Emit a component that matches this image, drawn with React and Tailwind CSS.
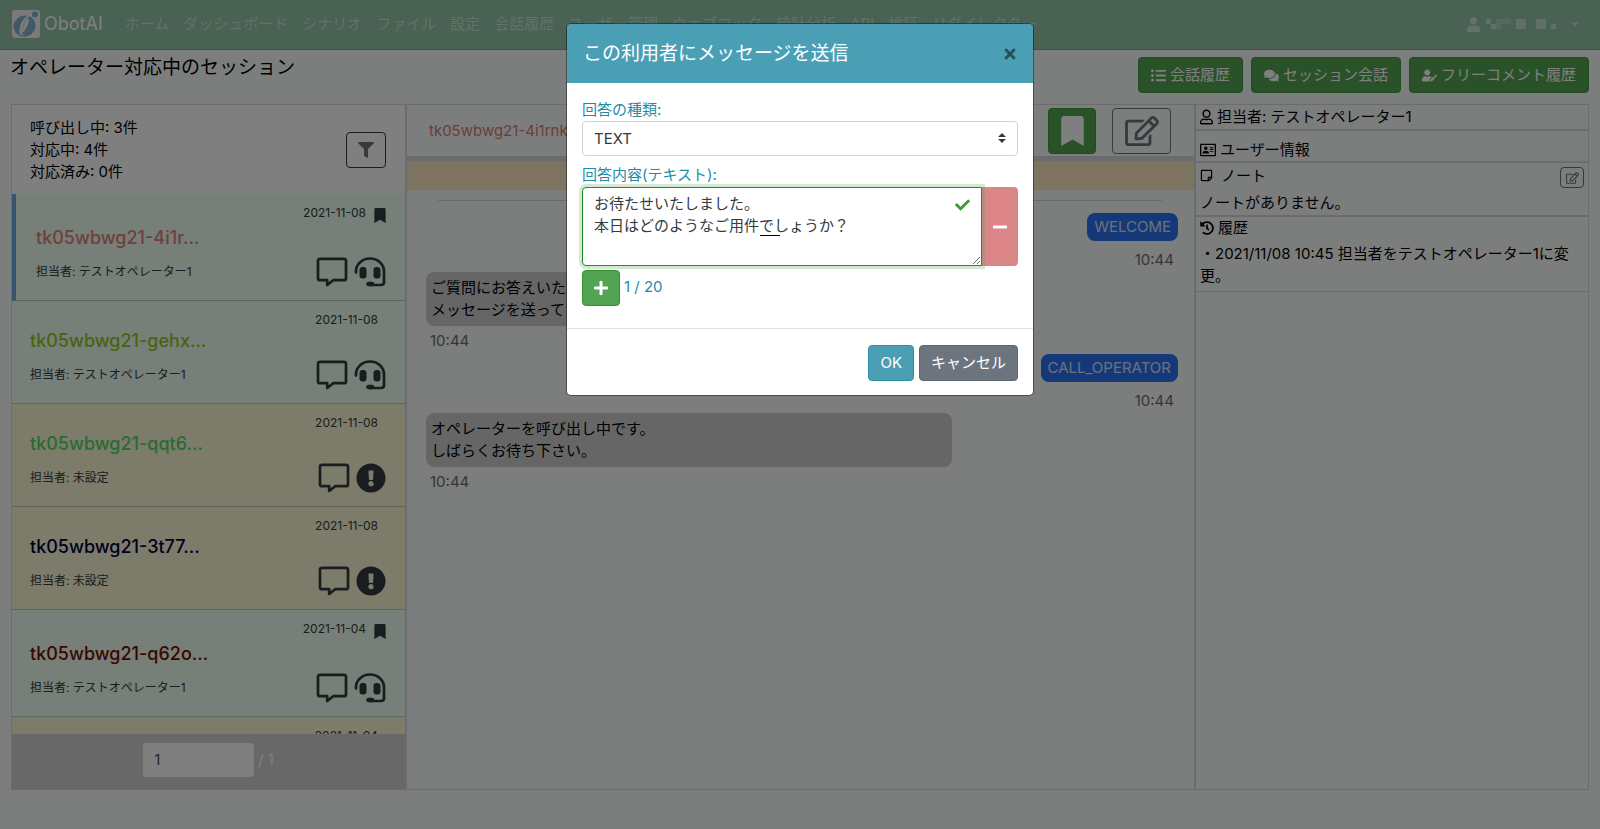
import React, { useState } from 'react';
import { FaUser, FaListUl, FaComments, FaUserEdit, FaFilter, FaBookmark, FaRegEdit, FaRegUser, FaRegAddressCard, FaRegStickyNote, FaHistory, FaExclamationCircle, FaPlus, FaMinus, FaTimes, FaCheck, FaCaretDown } from 'react-icons/fa';

const navItems = ['ホーム', 'ダッシュボード', 'シナリオ', 'ファイル', '設定', '会話履歴', 'ユーザー管理', 'ウェブフック', '統計分析', 'API', '検証', 'リダイレクター'];

const sessions = [
    { name: 'tk05wbwg21-4i1r...', date: '2021-11-08', operator: 'テストオペレーター1', color: 'text-[#e08078]', marked: true, selected: true },
    { name: 'tk05wbwg21-gehx...', date: '2021-11-08', operator: 'テストオペレーター1', color: 'text-[#92c81e]' },
    { name: 'tk05wbwg21-qqt6...', date: '2021-11-08', operator: '未設定', color: 'text-[#50d868]', waiting: true },
    { name: 'tk05wbwg21-3t77...', date: '2021-11-08', operator: '未設定', color: 'text-[#000040]', waiting: true },
    { name: 'tk05wbwg21-q62o...', date: '2021-11-04', operator: 'テストオペレーター1', color: 'text-[#780c00]', marked: true },
    { date: '2021-11-04', waiting: true },
];

const messages = [
    { mine: true, lines: ['WELCOME'] },
    { lines: ['ご質問にお答えいたします。', 'メッセージを送ってください。'] },
    { mine: true, lines: ['CALL_OPERATOR'] },
    { lines: ['オペレーターを呼び出し中です。', 'しばらくお待ち下さい。'] },
];

const Logo = () => (
    <svg viewBox="0 0 28 28" className="w-7 h-7">
        <rect width="28" height="28" rx="3" fill="#f6f2f6" />
        <ellipse cx="12.5" cy="16" rx="11" ry="10.5" transform="rotate(-20 12.5 16)" fill="#7fb0cc" />
        <ellipse cx="13.5" cy="15.5" rx="5" ry="10.5" transform="rotate(24 13.5 15.5)" fill="#f6f2f6" />
        <ellipse cx="15" cy="15.5" rx="3.6" ry="9.6" transform="rotate(24 15 15.5)" fill="#7fb0cc" />
        <ellipse cx="13.5" cy="15.5" rx="2" ry="7.5" transform="rotate(24 13.5 15.5)" fill="#f6f2f6" />
        <circle cx="23" cy="4.5" r="3" fill="#7fb0cc" />
    </svg>
);

const CommentIcon = () => (
    <svg viewBox="0 0 32 30" className="w-8 h-[30px]" fill="none" stroke="currentColor" strokeWidth="2.7" strokeLinejoin="round">
        <path d="M4 1.8H28Q30 1.8 30 3.8V21.2Q30 23.2 28 23.2H17.2L11.2 28V23.2H4Q2 23.2 2 21.2V3.8Q2 1.8 4 1.8Z" />
    </svg>
);

const HeadsetIcon = () => (
    <svg viewBox="0 0 32 30" className="w-8 h-[30px]" fill="none" stroke="currentColor" strokeWidth="2.7" strokeLinecap="round">
        <path d="M2 15.5V14.5A14 13 0 0 1 30 14.5V25Q30 28 27 28H16" />
        <path d="M14.5 27H18" strokeWidth="4.6" />
        <rect x="5.5" y="10" width="7" height="11.5" rx="3" fill="currentColor" stroke="none" />
        <rect x="19.5" y="10" width="7" height="11.5" rx="3" fill="currentColor" stroke="none" />
    </svg>
);

const Navbar = () => (
    <nav className="h-[50px] shrink-0 flex items-center px-3 pb-px bg-[#92c4a6] border-b border-[#78a88c] whitespace-nowrap">
        <a href="#home" className="flex items-center gap-1 text-[18px] text-white">
            <Logo />
            ObotAI
        </a>
        <div className="flex gap-[14px] ml-[22px] text-white/50">
            {navItems.map((item) => <a key={item} href="#nav">{item}</a>)}
        </div>
        <button type="button" aria-label="アカウント" className="ml-auto mr-[7px] flex items-center gap-1 text-white/50">
            <FaUser className="w-[15px] h-[15px]" />
            <svg viewBox="0 0 80 14" className="w-20 h-[14px]" fill="currentColor">
                <path d="M1 2h5v5H1zM6 7h5v5H6zM31 2h10v10H31zM51 2h10v10H51zM66 7h5v5H66z" opacity=".9" />
                <path d="M11 2h5v10h-5zM16 2h10v5H16z" opacity=".5" />
            </svg>
            <FaCaretDown className="w-3 h-3" />
        </button>
    </nav>
);

const TopButton = ({ icon: Icon, children }) => (
    <button type="button" className="h-9 px-3 flex items-center gap-1 rounded bg-[#52a452] border border-[#429642] text-white">
        <Icon className="w-auto h-[15px]" />
        {children}
    </button>
);

const SessionItem = ({ session }) => (
    <li className={`border-b border-black/20 pt-[11px] pb-[13px] pr-[19px] ${session.selected ? 'border-l-4 border-l-[#68a8e0] pl-5' : 'pl-[18px]'} ${session.waiting ? 'bg-[#faf8d4]' : 'bg-[#ecfff0]'}`}>
        <div className={`flex justify-end items-start gap-2 text-xs ${session.marked ? 'h-5' : 'h-4 pr-2'}`}>
            <span>{session.date}</span>
            {session.marked && <FaBookmark className="w-3 h-[15px] mt-[3px]" />}
        </div>
        <div className={`text-[18px] leading-[26px] font-medium ${session.color}`}>{session.name}</div>
        <div className="mt-[6px] flex items-center gap-[6px]">
            <span className="text-xs mr-auto">{session.operator && `担当者: ${session.operator}`}</span>
            <CommentIcon />
            {session.waiting ? <FaExclamationCircle className="w-[30px] h-[30px]" /> : <HeadsetIcon />}
        </div>
    </li>
);

const Sidebar = () => (
    <aside className="min-w-0 min-h-0 flex flex-col bg-white text-[#343a40]">
        <div className="h-[89px] shrink-0 flex items-center justify-between pl-[18px] pr-[19px] text-black">
            <div>
                <p>呼び出し中: 3件</p>
                <p>対応中: 4件</p>
                <p>対応済み: 0件</p>
            </div>
            <button type="button" aria-label="絞り込み" className="w-10 h-9 flex items-center justify-center rounded border border-[#343a40] text-[#6c757d]">
                <FaFilter className="w-4 h-4" />
            </button>
        </div>
        <ul className="flex-1 min-h-0 overflow-hidden">
            {sessions.map((session, i) => <SessionItem key={i} session={session} />)}
        </ul>
        <div className="h-[55px] shrink-0 pb-1 flex items-center justify-center gap-1 bg-[#d0d0d0] text-white">
            <input type="text" defaultValue="1" aria-label="ページ" className="w-[111px] h-[34px] px-[11px] rounded bg-white text-[#495057]" />
            / 1
        </div>
    </aside>
);

const Chat = () => (
    <section className="min-w-0 flex flex-col border-x-2 border-[#d6d8e0]">
        <header className="h-[51px] shrink-0 flex items-center pl-[22px] pr-[23px] gap-4">
            <span className="mr-auto text-[#d87870]">tk05wbwg21-4i1rnkwx</span>
            <button type="button" aria-label="ブックマーク" className="w-12 h-[46px] flex items-center justify-center rounded bg-[#52a452] border border-[#429642] text-white">
                <FaBookmark className="w-[23px] h-[30px]" />
            </button>
            <button type="button" aria-label="編集" className="w-[59px] h-[46px] flex items-center justify-center rounded border border-[#6c757d] text-[#6c757d]">
                <FaRegEdit className="w-[34px] h-[30px]" />
            </button>
        </header>
        <div className="h-[34px] shrink-0 border-t-[5px] border-[#d6d8e0] bg-[#f8e8bc]" />
        <div className="pl-[19px] pr-4">
            <hr className="mt-[10px] ml-3 mr-4 border-black/15" />
            <ol className="pt-3">
                {messages.map((message, i) => (
                    <li key={i} className={message.mine ? 'flex flex-col items-end' : 'flex flex-col items-start mt-px mb-[2px]'}>
                        {message.mine ? (
                            <p className="rounded-lg px-[7px] py-[3px] bg-[#2b70f0] text-white/80">{message.lines[0]}</p>
                        ) : (
                            <div className="w-[70%] rounded-lg px-[5px] py-[5px] bg-[#cccccc] text-black">
                                {message.lines.map((line) => <p key={line}>{line}</p>)}
                            </div>
                        )}
                        <time className={message.mine ? 'mt-2 mr-1 text-[#6c6c6c]' : 'mt-1 ml-1 text-[#6c6c6c]'}>10:44</time>
                    </li>
                ))}
            </ol>
        </div>
    </section>
);

const Details = () => (
    <aside className="min-w-0 text-black">
        <h2 className="h-[26px] px-1 flex items-center gap-1 border-b-2 border-[#d6d8e0]"><FaRegUser className="w-[13px] h-4" />担当者: テストオペレーター1</h2>
        <h2 className="h-[32px] pt-2 px-1 flex items-center gap-1 border-b-2 border-[#d6d8e0]"><FaRegAddressCard className="w-4 h-4" />ユーザー情報</h2>
        <section className="h-[54px] px-1 border-b-2 border-[#d6d8e0]">
            <div className="flex justify-between">
                <h2 className="flex items-center gap-2"><FaRegStickyNote className="w-[13px] h-[13px]" />ノート</h2>
                <button type="button" aria-label="ノートを編集" className="w-6 h-[21px] mt-1 flex items-center justify-center rounded border border-[#6c757d] text-[#6c757d]">
                    <FaRegEdit className="w-[13px] h-3" />
                </button>
            </div>
            <p className="mt-1">ノートがありません。</p>
        </section>
        <section className="pl-1 pr-3 pb-1 border-b border-[#d6d8e0]">
            <h2 className="flex items-center gap-1"><FaHistory className="w-[14px] h-[14px]" />履歴</h2>
            <p className="mt-1">・2021/11/08 10:45 担当者をテストオペレーター1に変更。</p>
        </section>
    </aside>
);

const MessageModal = () => {
    const [text, setText] = useState('お待たせいたしました。\n本日はどのようなご用件でしょうか？');

    return (
        <div className="fixed inset-0 bg-black/50 px-4 pt-6">
            <div role="dialog" aria-modal="true" aria-labelledby="modal-title" className="w-full max-w-[466px] mx-auto rounded bg-white text-[#212529] outline outline-black/40 overflow-hidden">
                <div className="h-[59px] flex items-center justify-between px-4 bg-[#4a9fb5] text-white">
                    <h1 id="modal-title" className="text-[19px]">この利用者にメッセージを送信</h1>
                    <button type="button" aria-label="閉じる" className="text-[#264f5b]"><FaTimes className="w-[14px] h-4" /></button>
                </div>
                <div className="px-[15px] pt-4 pb-[22px] text-[#1f8ca6]">
                    <label htmlFor="kind" className="block">回答の種類:</label>
                    <div className="relative">
                        <select id="kind" defaultValue="TEXT" className="block w-full h-[35px] px-[11px] appearance-none rounded border border-[#ced4da] bg-white text-[#343a40]">
                            <option>TEXT</option>
                        </select>
                        <svg viewBox="0 0 4 5" className="absolute right-3 top-3 w-2 h-[10px] pointer-events-none" fill="#343a40"><path d="M2 0 0 2h4zM2 5 0 3h4z" /></svg>
                    </div>
                    <label htmlFor="answer" className="block mt-2">回答内容(テキスト):</label>
                    <div className="relative mt-px flex h-[79px]">
                        <textarea id="answer" value={text} onChange={(e) => setText(e.target.value)} className="flex-1 min-w-0 h-full pl-[11px] pr-9 py-[5px] rounded-l border border-[#1f8f1f] ring-3 ring-[#52a452]/25 outline-none bg-white text-[#343a40] relative z-10" />
                        <button type="button" aria-label="削除" className="w-9 flex items-center justify-center rounded-r bg-[#dc8588] text-white"><FaMinus className="w-4 h-4" /></button>
                        <FaCheck className="absolute z-20 right-12 top-[10px] w-[15px] h-4 text-[#3c9c3c]" />
                        <span className="absolute z-20 left-[178px] top-12 w-5 h-px bg-black" />
                    </div>
                    <div className="mt-1 flex gap-1">
                        <button type="button" aria-label="追加" className="w-[38px] h-9 flex items-center justify-center rounded bg-[#52a452] border border-[#2f942f] text-white"><FaPlus className="w-4 h-4" /></button>
                        <span className="mt-[6px]">1 / 20</span>
                    </div>
                </div>
                <div className="flex justify-end gap-[5px] px-[15px] pt-4 pb-[14px] border-t border-[#dee2e6] text-white">
                    <button type="button" className="h-9 px-[11px] rounded bg-[#4a9fb5] border border-[#2f8fa8]">OK</button>
                    <button type="button" className="h-9 px-[11px] rounded bg-[#6c757d] border border-[#5f6870]">キャンセル</button>
                </div>
            </div>
        </div>
    );
};

const App = () => (
    <div className="h-screen flex flex-col bg-[#f8fcfa] font-[Inter,'Noto_Sans_CJK_JP',sans-serif] text-[15px] leading-[22px]">
        <Navbar />
        <div className="flex items-start justify-between pl-[10px] pr-[11px] pt-[7px] pb-[11px]">
            <h1 className="text-[19px] text-black leading-[22px]">オペレーター対応中のセッション</h1>
            <div className="flex gap-2">
                <TopButton icon={FaListUl}>会話履歴</TopButton>
                <TopButton icon={FaComments}>セッション会話</TopButton>
                <TopButton icon={FaUserEdit}>フリーコメント履歴</TopButton>
            </div>
        </div>
        <main className="flex-1 min-h-0 grid grid-cols-[393fr_791fr_392fr] grid-rows-[minmax(0,1fr)] mx-[11px] mb-[39px] border border-[#d6d8e0]">
            <Sidebar />
            <Chat />
            <Details />
        </main>
        <MessageModal />
    </div>
);

export default App;
